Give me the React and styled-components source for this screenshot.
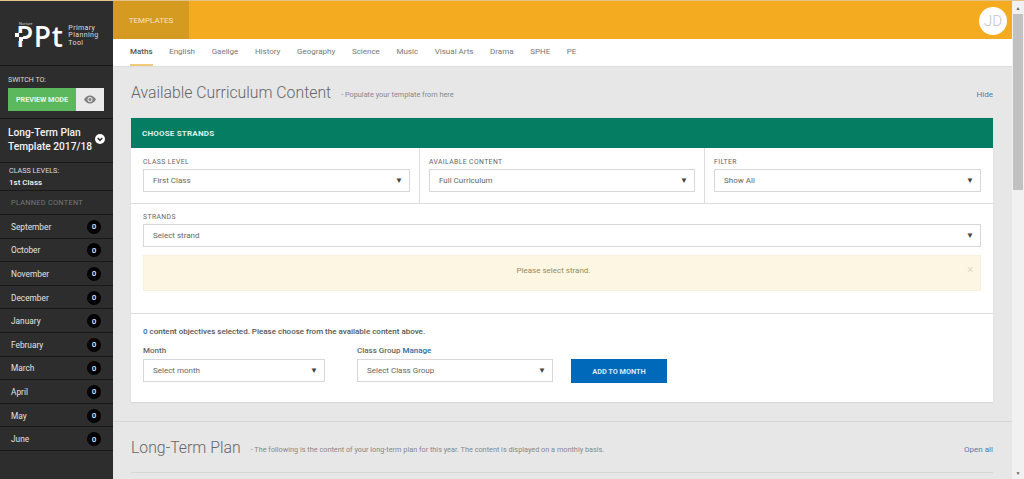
import React from 'react'
import styled, { createGlobalStyle } from 'styled-components'

const Global = createGlobalStyle`
html, body { margin: 0; padding: 0; height: 100%; overflow: hidden; }
body { font-family: Roboto, "Liberation Sans", sans-serif; background: #e7e7e7; color: #555; }
#root { height: 100%; }
* { box-sizing: border-box; }
`

const Page = styled.div`
display: flex;
height: 479px;
width: 1024px;
border-top: 1px solid #e2c48a;
overflow: hidden;
`

const Sidebar = styled.aside`
width: 113px;
flex: none;
background: #2d2d2d;
color: #f1f1f1;
display: flex;
flex-direction: column;
`

const Logo = styled.div`
height: 65px;
border-bottom: 1px solid #181818;
display: flex;
align-items: flex-end;
padding: 0 0 18px 16px;
gap: 5px;
`

const LogoMark = styled.div`
display: flex;
flex-direction: column;
`

const Brand = styled.span`
font-size: 4px;
line-height: 4px;
padding-left: 3px;
color: #ccc;
`

const Letters = styled.span`
position: relative;
font-family: "Open Sans", sans-serif;
font-weight: 600;
font-size: 28px;
line-height: 21px;
letter-spacing: 0.6px;
color: #fff;
`

const Checker = styled.svg`
position: absolute;
left: -1px;
top: 7px;
`

const LogoText = styled.div`
font-size: 7px;
line-height: 7.3px;
letter-spacing: 0.4px;
color: #ddd;
`

const Switch = styled.div`
height: 53px;
padding: 10px 8px 0;
border-bottom: 1px solid #181818;
`

const SwitchLabel = styled.div`
font-size: 7px;
line-height: 9px;
color: #ddd;
margin-bottom: 3px;
`

const Toggle = styled.div`
display: flex;
height: 23px;
width: 96px;
`

const PreviewMode = styled.div`
width: 68px;
background: #5cb85c;
color: #e8f6e8;
font-size: 7.2px;
font-weight: 700;
display: flex;
align-items: center;
justify-content: center;
`

const EyeBox = styled.div`
flex: 1;
background: #eaeaea;
color: #808080;
display: flex;
align-items: center;
justify-content: center;
`

const PlanTitle = styled.div`
height: 44px;
padding: 7px 24px 0 8px;
border-bottom: 1px solid #181818;
font-size: 10.2px;
font-weight: 500;
line-height: 14px;
color: #f4f4f4;
position: relative;
white-space: nowrap;
`

const Chevron = styled.svg`
position: absolute;
right: 8px;
top: 15px;
`

const ClassLevels = styled.div`
height: 28px;
padding: 2px 9px 0;
border-bottom: 1px solid #181818;
font-size: 7.2px;
line-height: 12px;
color: #ddd;
`

const ClassValue = styled.div`
font-weight: 500;
font-size: 8px;
line-height: 12px;
color: #f4f4f4;
`

const PlannedLabel = styled.div`
height: 24px;
padding: 0 11px;
display: flex;
align-items: center;
font-size: 7.4px;
letter-spacing: 0.25px;
color: #777;
border-bottom: 1px solid #181818;
`

const MonthRow = styled.div`
height: 23.6px;
padding: 1px 12px 0 11px;
display: flex;
align-items: center;
justify-content: space-between;
font-size: 8.3px;
color: #e4e4e4;
border-bottom: 1px solid #181818;
`

const Count = styled.span`
width: 14px;
height: 14px;
border-radius: 50%;
background: #000;
color: #eee;
font-size: 8px;
font-weight: 500;
display: flex;
align-items: center;
justify-content: center;
`

const Main = styled.main`
flex: 1;
min-width: 0;
display: flex;
flex-direction: column;
background: #e7e7e7;
`

const TopBar = styled.header`
height: 38px;
flex: none;
background: #f4ab20;
display: flex;
align-items: stretch;
justify-content: space-between;
padding-right: 5px;
`

const TopTab = styled.div`
width: 76px;
background: #d59a20;
color: #f6e5c0;
font-size: 8px;
display: flex;
align-items: center;
justify-content: center;
`

const Avatar = styled.div`
width: 28px;
height: 28px;
margin-top: 6px;
border-radius: 50%;
background: #fff;
color: #c4c4c4;
font-size: 15px;
font-weight: 300;
display: flex;
align-items: center;
justify-content: center;
`

const Tabs = styled.nav`
height: 28px;
flex: none;
background: #fff;
display: flex;
padding-left: 17px;
gap: 16.6px;
border-bottom: 1px solid #dedede;
`

const Tab = styled.div`
height: 27px;
display: flex;
align-items: center;
font-size: 8px;
color: ${p => (p.$active ? '#555' : '#777')};
font-weight: ${p => (p.$active ? 500 : 400)};
border-bottom: 2px solid ${p => (p.$active ? '#f0c97a' : 'transparent')};
`

const Content = styled.div`
flex: 1;
min-height: 0;
padding: 0 19px 0 18px;
overflow: hidden;
`

const Heading = styled.div`
height: 51px;
display: flex;
align-items: center;
`

const Title = styled.h2`
margin: 0;
font-size: 15.8px;
font-weight: 300;
color: #666;
white-space: nowrap;
`

const Subtitle = styled.span`
margin-left: 10px;
margin-top: 4px;
font-size: 7.3px;
color: #888;
white-space: nowrap;
`

const Action = styled.a`
margin-left: auto;
margin-top: 4px;
font-size: 8px;
color: #4b7cb0;
`

const Panel = styled.section`
background: #fff;
border-bottom: 1px solid #d9d9d9;
box-shadow: 0 0 1px #cfcfcf;
`

const PanelHead = styled.div`
height: 30px;
background: #047d62;
color: #dff2ec;
font-size: 8px;
font-weight: 700;
letter-spacing: 0.2px;
display: flex;
align-items: center;
padding-left: 11px;
`

const FilterRow = styled.div`
display: grid;
grid-template-columns: 288px 285px 1fr;
height: 56px;
border-bottom: 1px solid #ddd;
`

const FilterCell = styled.div`
padding: 10px ${p => (p.$last ? '12px' : '9px')} 0 ${p => (p.$first ? '12px' : '9px')};
border-left: ${p => (p.$first ? 'none' : '1px solid #ddd')};
`

const FieldLabel = styled.div`
font-size: 6.8px;
line-height: 9px;
letter-spacing: 0.4px;
color: #666;
margin-bottom: 2px;
`

const SelectBox = styled.div`
height: 23px;
border: 1px solid #d8d8d8;
padding: 0 6px 0 9px;
display: flex;
align-items: center;
justify-content: space-between;
font-size: 8px;
color: #666;
background: #fff;
`

const Arrow = styled.span`
font-size: 8px;
color: #444;
`

const StrandBlock = styled.div`
padding: 9px 12px 22px;
border-bottom: 1px solid #ddd;
`

const AlertBox = styled.div`
margin-top: 8px;
height: 36px;
padding: 0 17px 6px 0;
background: #fdf6e3;
border: 1px solid #f9f1dc;
color: #9a8a62;
font-size: 8px;
display: flex;
align-items: center;
justify-content: center;
position: relative;
`

const Close = styled.span`
position: absolute;
right: 7px;
top: 7px;
font-size: 11px;
color: #ddd8c8;
`

const AddBlock = styled.div`
height: 88px;
padding: 12px 12px 0;
`

const Selected = styled.div`
font-size: 8px;
line-height: 11px;
font-weight: 500;
color: #555;
`

const Blue = styled.span`
color: #2d6ca8;
font-weight: 500;
`

const AddRow = styled.div`
display: flex;
align-items: flex-end;
margin-top: 8px;
`

const Field = styled.div`
width: ${p => p.$width}px;
margin-right: ${p => p.$gap}px;
`

const MonthLabel = styled.div`
font-size: 8px;
line-height: 11px;
font-weight: 500;
color: #666;
margin-bottom: 3px;
`

const AddButton = styled.button`
width: 96px;
height: 24px;
margin-bottom: -1px;
border: none;
background: #0069b9;
color: #dbe9f5;
font: 700 7.3px Roboto, sans-serif;
`

const SectionRule = styled.div`
height: 1px;
background: #d6d6d6;
margin: 18px -19px 0 -18px;
`

const PlanHeading = styled(Heading)`
border-bottom: 1px solid #d6d6d6;
`

const Scrollbar = styled.div`
width: 12px;
flex: none;
background: #f1f1f1;
display: flex;
flex-direction: column;
align-items: center;
`

const ScrollArrow = styled.div`
height: 13px;
flex: none;
display: flex;
align-items: center;
justify-content: center;
color: #666;
font-size: 5px;
margin-top: ${p => (p.$bottom ? 'auto' : '0')};
`

const ScrollThumb = styled.div`
width: 10px;
height: 176px;
background: #c1c1c1;
`

const months = ['September', 'October', 'November', 'December', 'January', 'February', 'March', 'April', 'May', 'June']
const subjects = ['Maths', 'English', 'Gaeilge', 'History', 'Geography', 'Science', 'Music', 'Visual Arts', 'Drama', 'SPHE', 'PE']

const Select = ({ children }) => (
  <SelectBox>
    {children}
    <Arrow>▼</Arrow>
  </SelectBox>
)

const App = () => {
  return (
    <Page>
      <Global />
      <Sidebar>
        <Logo>
          <LogoMark>
            <Brand>Nurture</Brand>
            <Letters>
              PPt
              <Checker width="9" height="9" viewBox="0 0 9 9">
                <rect x="0" y="0" width="4" height="4" fill="#fff" />
                <rect x="4" y="4" width="4" height="4" fill="#fff" />
                <rect x="4" y="0" width="4" height="4" fill="#2d2d2d" />
                <rect x="0" y="4" width="4" height="4" fill="#2d2d2d" />
              </Checker>
            </Letters>
          </LogoMark>
          <LogoText>Primary<br />Planning<br />Tool</LogoText>
        </Logo>
        <Switch>
          <SwitchLabel>SWITCH TO:</SwitchLabel>
          <Toggle>
            <PreviewMode>PREVIEW MODE</PreviewMode>
            <EyeBox>
              <svg width="12" height="9" viewBox="0 0 24 16" fill="currentColor">
                <path d="M12 0C6.5 0 2.2 3.4 0 8c2.2 4.6 6.5 8 12 8s9.8-3.4 12-8c-2.2-4.6-6.5-8-12-8zm0 13a5 5 0 1 1 0-10 5 5 0 0 1 0 10z" />
                <circle cx="12" cy="8" r="3" />
              </svg>
            </EyeBox>
          </Toggle>
        </Switch>
        <PlanTitle>
          Long-Term Plan<br />Template 2017/18
          <Chevron width="10" height="10" viewBox="0 0 11 11">
            <circle cx="5.5" cy="5.5" r="5.5" fill="#fff" />
            <path d="M3 4.5l2.5 2.5L8 4.5" fill="none" stroke="#2d2d2d" strokeWidth="1.6" />
          </Chevron>
        </PlanTitle>
        <ClassLevels>
          CLASS LEVELS:
          <ClassValue>1st Class</ClassValue>
        </ClassLevels>
        <PlannedLabel>PLANNED CONTENT</PlannedLabel>
        {months.map(m => (
          <MonthRow key={m}>
            {m}
            <Count>0</Count>
          </MonthRow>
        ))}
      </Sidebar>
      <Main>
        <TopBar>
          <TopTab>TEMPLATES</TopTab>
          <Avatar>JD</Avatar>
        </TopBar>
        <Tabs>
          {subjects.map((s, i) => (
            <Tab key={s} $active={i === 0}>{s}</Tab>
          ))}
        </Tabs>
        <Content>
          <Heading>
            <Title>Available Curriculum Content</Title>
            <Subtitle>- Populate your template from here</Subtitle>
            <Action>Hide</Action>
          </Heading>
          <Panel>
            <PanelHead>CHOOSE STRANDS</PanelHead>
            <FilterRow>
              <FilterCell $first>
                <FieldLabel>CLASS LEVEL</FieldLabel>
                <Select>First Class</Select>
              </FilterCell>
              <FilterCell>
                <FieldLabel>AVAILABLE CONTENT</FieldLabel>
                <Select>Full Curriculum</Select>
              </FilterCell>
              <FilterCell $last>
                <FieldLabel>FILTER</FieldLabel>
                <Select>Show All</Select>
              </FilterCell>
            </FilterRow>
            <StrandBlock>
              <FieldLabel>STRANDS</FieldLabel>
              <Select>Select strand</Select>
              <AlertBox>
                Please select strand.
                <Close>×</Close>
              </AlertBox>
            </StrandBlock>
            <AddBlock>
              <Selected><Blue>0</Blue> content objectives selected. Please choose from the available content above.</Selected>
              <AddRow>
                <Field $width={182} $gap={32}>
                  <MonthLabel>Month</MonthLabel>
                  <Select>Select month</Select>
                </Field>
                <Field $width={196} $gap={18}>
                  <MonthLabel>Class Group <Blue>Manage</Blue></MonthLabel>
                  <Select>Select Class Group</Select>
                </Field>
                <AddButton>ADD TO MONTH</AddButton>
              </AddRow>
            </AddBlock>
          </Panel>
          <SectionRule />
          <PlanHeading>
            <Title>Long-Term Plan</Title>
            <Subtitle>- The following is the content of your long-term plan for this year. The content is displayed on a monthly basis.</Subtitle>
            <Action>Open all</Action>
          </PlanHeading>
        </Content>
      </Main>
      <Scrollbar>
        <ScrollArrow>▲</ScrollArrow>
        <ScrollThumb />
        <ScrollArrow $bottom>▼</ScrollArrow>
      </Scrollbar>
    </Page>
  )
}

export default App
